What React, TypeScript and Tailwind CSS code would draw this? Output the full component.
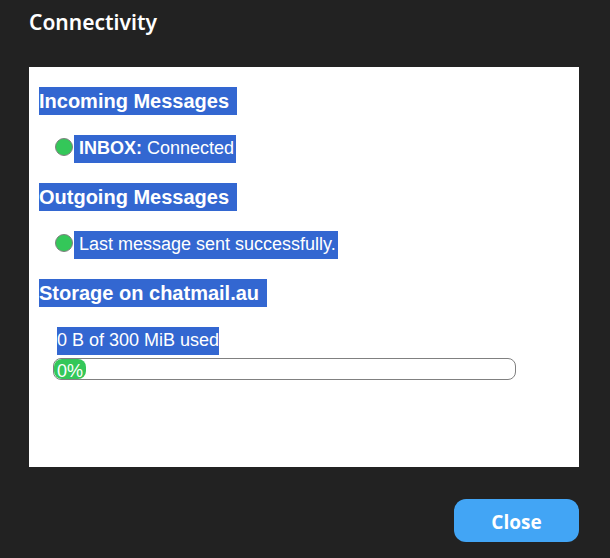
import type { ReactNode } from "react";

const SECTIONS = [
  { title: "Incoming Messages", label: "INBOX:", status: "Connected" },
  { title: "Outgoing Messages", label: "", status: "Last message sent successfully." },
];

const STORAGE = { host: "chatmail.au", text: "0 B of 300 MiB used", percent: 0 };

function Heading({ children }: { children: ReactNode }) {
  return (
    <h3 className="mb-5 text-xl leading-7 font-bold text-white">
      <span className="inline-block bg-[#3367d1] pr-2">{children}</span>
    </h3>
  );
}

export default function App() {
  return (
    <div className="min-h-screen bg-[#222222] pr-[31px] pb-4 pl-[29px]">
      <h2 className="pt-2 pb-[31px] font-['Noto_Sans',sans-serif] text-[21px] leading-7 font-semibold text-white">
        Connectivity
      </h2>

      <div className="min-h-[400px] bg-white px-[10px] pt-5 font-['Liberation_Sans',sans-serif]">
        {SECTIONS.map((section) => (
          <section key={section.title}>
            <Heading>{section.title}</Heading>
            <p className="mb-5 ml-4 flex h-7 text-lg leading-[26px] text-white">
              <span className="mt-[3px] mr-px size-[18px] rounded-full border border-[#808080] bg-[#34c759]" />
              <span className="bg-[#3367d1] pr-[2px] pl-[5px]">
                {section.label && <b>{section.label} </b>}
                {section.status}
              </span>
            </p>
          </section>
        ))}

        <section>
          <Heading>Storage on {STORAGE.host}</Heading>
          <p className="ml-[18px] flex h-7 text-lg leading-[26px] text-white">
            <span className="bg-[#3367d1]">{STORAGE.text}</span>
          </p>
          <div className="mt-[3px] mr-[53px] ml-[14px] h-[22px] rounded-lg border border-[#808080]">
            <div
              className="h-full min-w-8 rounded-lg bg-[#34c759] pl-[3px] text-lg leading-6 text-white"
              style={{ width: `${STORAGE.percent}%` }}
            >
              {STORAGE.percent}%
            </div>
          </div>
        </section>
      </div>

      <div className="mt-8 flex justify-end">
        <button
          type="button"
          className="h-[43px] w-[125px] rounded-xl bg-[#42a5f5] pt-1 font-['Open_Sans',sans-serif] text-[19px] font-bold text-white"
        >
          Close
        </button>
      </div>
    </div>
  );
}
